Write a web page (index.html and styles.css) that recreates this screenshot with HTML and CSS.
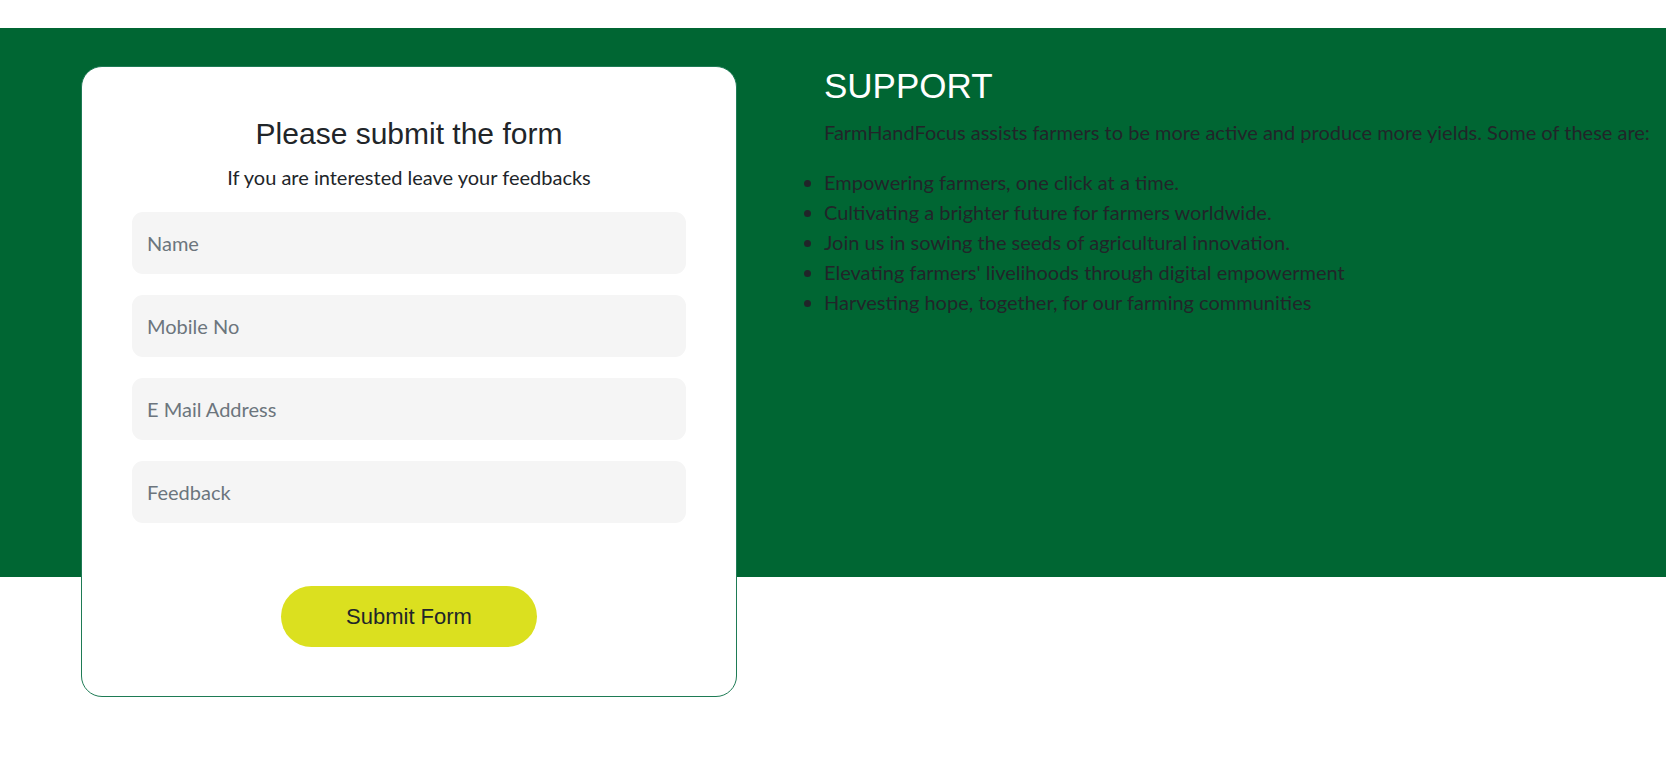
FILE: index.html
```html
<!DOCTYPE html>
<html lang="en">
<head>
<meta charset="utf-8">
<title>Support</title>
<link rel="stylesheet" href="styles.css">
</head>
<body>
<section class="support">
  <form class="card">
    <h2 class="card-title">Please submit the form</h2>
    <p class="card-sub">If you are interested leave your feedbacks</p>
    <input class="field" type="text" placeholder="Name">
    <input class="field" type="text" placeholder="Mobile No">
    <input class="field" type="email" placeholder="E Mail Address">
    <input class="field" type="text" placeholder="Feedback">
    <div class="actions"><button class="submit" type="button">Submit Form</button></div>
  </form>
  <div class="info">
    <h1 class="info-title">SUPPORT</h1>
    <p class="info-text">FarmHandFocus assists farmers to be more active and produce more yields. Some of these are:</p>
    <ul class="info-list">
      <li>Empowering farmers, one click at a time.</li>
      <li>Cultivating a brighter future for farmers worldwide.</li>
      <li>Join us in sowing the seeds of agricultural innovation.</li>
      <li>Elevating farmers' livelihoods through digital empowerment</li>
      <li>Harvesting hope, together, for our farming communities</li>
    </ul>
  </div>
</section>
</body>
</html>
```
FILE: styles.css
```css
html, body {
  margin: 0;
  padding: 0;
  background: #ffffff;
}
body {
  font-family: Lato, "Open Sans", sans-serif;
  color: #212529;
}
.support {
  margin-top: 28px;
  padding: 38px 0 0 81px;
  background: linear-gradient(#006633, #006633) no-repeat left top / 100% 549px;
  display: flex;
  align-items: flex-start;
  gap: 87px;
}
.card {
  flex: 0 0 656px;
  box-sizing: border-box;
  background: #ffffff;
  border: 1px solid #1e7b55;
  border-radius: 21px;
  padding: 49px 50px 49px;
  display: flex;
  flex-direction: column;
}
.card-title {
  margin: 0;
  font-family: "Liberation Sans", Arial, sans-serif;
  font-weight: 400;
  font-size: 30px;
  line-height: 36px;
  text-align: center;
  color: #212529;
}
.card-sub {
  margin: 10px 0 20px;
  font-size: 20px;
  line-height: 30px;
  text-align: center;
}
.field {
  display: block;
  flex: none;
  box-sizing: border-box;
  width: 100%;
  height: 62px;
  margin: 0 0 21px;
  padding: 0 15px;
  border: none;
  border-radius: 11px;
  background: #f5f5f5;
  font-family: Lato, "Open Sans", sans-serif;
  font-size: 20px;
  color: #212529;
  outline: none;
}
.field::placeholder {
  color: #6c757d;
}
.actions {
  display: flex;
  justify-content: center;
  padding-top: 42px;
}
.submit {
  width: 256px;
  height: 61px;
  border: none;
  border-radius: 31px;
  background: #dbe01f;
  font-family: "Liberation Sans", Arial, sans-serif;
  font-size: 22px;
  color: #212529;
  cursor: pointer;
}
.info {
  flex: 1;
  min-width: 0;
}
.info-title {
  margin: 0;
  font-family: "Liberation Sans", Arial, sans-serif;
  font-weight: 400;
  font-size: 35px;
  line-height: 40px;
  color: #ffffff;
}
.info-text {
  margin: 11px 0 20px;
  font-size: 20px;
  line-height: 30px;
  white-space: nowrap;
}
.info-list {
  margin: 0;
  padding-left: 0;
  font-size: 20px;
  line-height: 30px;
}
```
